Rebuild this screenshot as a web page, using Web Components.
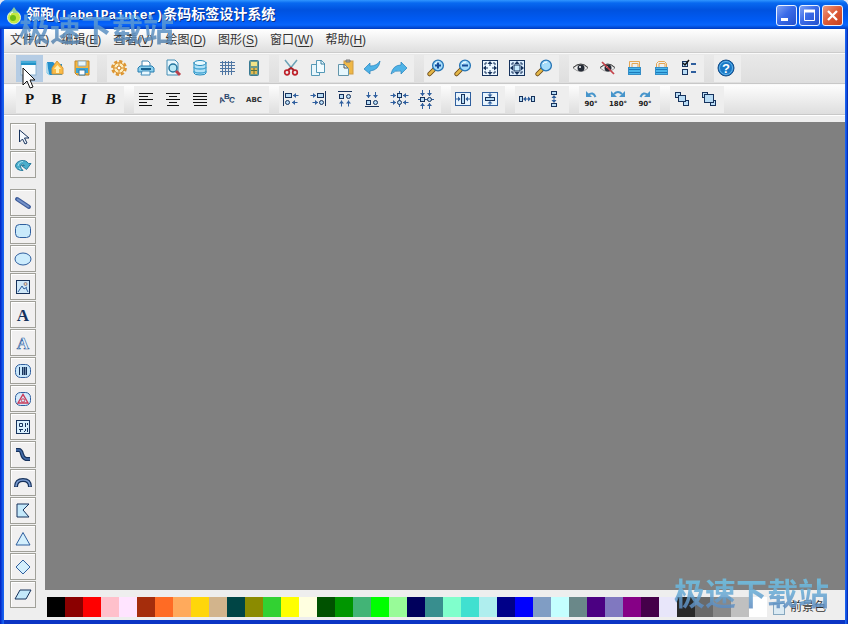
<!DOCTYPE html>
<html lang="zh-CN">
<head>
<meta charset="utf-8">
<title>领跑(LabelPainter)条码标签设计系统</title>
<style>
html,body{margin:0;height:100%}
body{font:12px/16px "Liberation Sans","Noto Sans CJK SC",sans-serif;background:#dfe8f5;overflow:hidden}
</style>
</head>
<body>
<label-painter></label-painter>
<script>
const N='#16325c', M='#2f5f9e', L='#b9dcf5';
const line=(d,c=N,w=1)=>`<path d="${d}" fill="none" stroke="${c}" stroke-width="${w}"/>`;
const box=(x,y,w,h,f=L,s=N,r=0)=>`<rect x="${x}" y="${y}" width="${w}" height="${h}" rx="${r}" fill="${f}" stroke="${s}"/>`;
const circ=(x,y,r,f=L,s=N)=>`<circle cx="${x}" cy="${y}" r="${r}" fill="${f}" stroke="${s}"/>`;
const poly=(p,f=L,s='none')=>`<polygon points="${p}" fill="${f}" stroke="${s}"/>`;
const AR={
 l:(x,y)=>line(`M${x} ${y}h5.5`,M)+poly(`${x},${y} ${x+3},${y-2.5} ${x+3},${y+2.5}`,M),
 r:(x,y)=>line(`M${x} ${y}h-5.5`,M)+poly(`${x},${y} ${x-3},${y-2.5} ${x-3},${y+2.5}`,M),
 u:(x,y)=>line(`M${x} ${y}v6`,M)+poly(`${x},${y} ${x-2.5},${y+3} ${x+2.5},${y+3}`,M),
 d:(x,y)=>line(`M${x} ${y}v-6`,M)+poly(`${x},${y} ${x-2.5},${y-3} ${x+2.5},${y-3}`,M)
};
const lens=(extra)=>`<path d="M2.5 15l4.5-4.500" stroke="#6b4a18" stroke-width="4.5" stroke-linecap="round"/><path d="M2.5 15l4-4" stroke="#e4b748" stroke-width="2.6" stroke-linecap="round"/><circle cx="11" cy="6.5" r="5.4" fill="#a5dcfa" stroke="#2574b5" stroke-width="1.3"/><path d="M8 5q1-2 4-2" stroke="#fff" fill="none"/>${extra}`;
const alignRows=a=>line(a.map((s,i)=>`M${s[0]} ${3.5+i*3}h${s[1]}`).join(''),'#111');
const eye=`<path d="M1 9q8-7 15 0-7 7-15 0z" fill="#eee" stroke="#999"/><circle cx="9" cy="9" r="3.5" fill="#252b36"/><circle cx="8" cy="8" r="1" fill="#fff"/><path d="M1 8.5q8-7 15 0" fill="none" stroke="#444"/>`;
const lock=(d)=>`<path d="${d}" fill="none" stroke="#e4a653"/><path d="M6 8V4.500h6V8" fill="none" stroke="#e4a653"/>${box(2.5,8.5,12,7,'#48b5ea','#348dc7')}${line('M3 10.5h11M3 13.5h11','#1d79ba')}`;
const rotate=(t,a)=>`${a}<text x="9" y="16" text-anchor="middle" font-family="DejaVu Sans" font-weight="bold" font-size="7" fill="#222">${t}</text>`;
const turnL=line('M6 5q5-4 7.5 2','#4795cb',2)+poly('4,1 4,7 10,7','#4795cb');
const turnR=line('M12 5q-5-4-7.5 2','#4795cb',2)+poly('14,1 14,7 8,7','#4795cb');
const turnB=line('M5 4q4-4 8 0','#4795cb',2)+poly('2,1 2,7 8,7','#4795cb')+poly('16,1 16,7 10,7','#4795cb');
const tri=(x,y,t)=>`<path transform="translate(${x} ${y}) rotate(${t})" d="M-2.5 0h5L0-3z" fill="${N}"/>`;
const ICONS={
 new:`<rect x="2" y="2" width="15" height="14" fill="#f9fdff" stroke="#8bb4d4"/><rect x="2" y="2" width="15" height="4" fill="#2193c8"/><path d="M2 3h15" stroke="#68c3e8"/>`,
 open:`<path d="M1 3h6l2 2h7v11H3z" fill="#248fcb"/><path d="M1 4v10l3 2" stroke="#6ec7ed" fill="none"/><path d="M6 9l5-7 6 7v6H6z" fill="#fbbb45" stroke="#d89a3c"/><path d="M8 10l3.5-4 3.5 4h-2v4h-3v-4z" fill="#fff0b4"/>`,
 save:`<path d="M2 2h14v14H4l-2-2z" fill="#f4b641" stroke="#c18628"/><path d="M5 2h8v5H5z" fill="#e7f6fc" stroke="#8faab9"/><path d="M3 9h12v5H3z" fill="#3ca6d6"/><path d="M6 11h6v5H6z" fill="#fff" stroke="#377ba6"/>`,
 gear:`<circle cx="9" cy="9" r="6.7" fill="#fbeecb" stroke="#dd9735" stroke-width="2.4" stroke-dasharray="3.2 2.06"/><circle cx="9" cy="9" r="5.3" fill="#fdeebf" stroke="#d98a22"/><circle cx="9" cy="9" r="2" fill="#fff" stroke="#c77b1d"/>${line('M9 4v3M9 11v3M4 9h3M11 9h3','#d98a22')}`,
 print:`<path d="M5 7V2h6l2 2v3" fill="#fff" stroke="#4386b2"/><path d="M3 7h12l2 2v4H1V9z" fill="#8bd0ee" stroke="#267caf"/><path d="M4 9h10v2H4z" fill="#17608f"/><path d="M5 12h8v4H4z" fill="#e8f8ff" stroke="#438cba"/>`,
 preview:`<path d="M3 1h8l3 3v12H3z" fill="#e8f7fd" stroke="#458eb5"/><circle cx="9" cy="9" r="4" fill="#b9e8f5" stroke="#24759e" stroke-width="1.5"/><path d="M12 12l4 4" stroke="#b9404b" stroke-width="3"/>`,
 db:`<path d="M3 3v11q0 2 6 2t6-2V3" fill="#b4e3f8" stroke="#238abd"/><ellipse cx="9" cy="4" rx="6" ry="2.5" fill="#e9faff" stroke="#238abd"/>${line('M3 8q0 2 6 2t6-2M3 12q0 2 6 2t6-2','#46a5d2',1.3)}`,
 grid:line('M2 3.5h15M2 6.5h15M2 9.5h15M2 12.5h15M4.5 2v14M7.5 2v14M10.5 2v14M13.5 2v14','#4f76a3'),
 calc:`<rect x="4.5" y="1.5" width="9" height="15" rx="1" fill="#6d9a8c" stroke="#397a94"/><rect x="6" y="3" width="6" height="4" fill="#f2e487"/><rect x="6" y="9" width="6" height="6" fill="#e5b94f"/>${line('M6 11.5h6M9 9v6','#54713f')}`,
 cut:`<path d="M3 1l8 10M15 1L7 11" stroke="#6ba2b6" stroke-width="1.5"/>${circ(5,13.5,2.3,'none','#be222b').replace('/>',' stroke-width="1.7"/>')}${circ(13,13.5,2.3,'none','#be222b').replace('/>',' stroke-width="1.7"/>')}<path d="M6 11l3-2 3 2" fill="none" stroke="#aa2027" stroke-width="2"/>`,
 copy:`<path d="M2.5 5.5h5l3 3v8h-8z" fill="#e8f6fb" stroke="#5599b7"/><path d="M7.5 1.5h5l3 3v9h-8z" fill="#f1fbff" stroke="#5599b7"/><path d="M12 1v4h4" fill="none" stroke="#387f9f"/>`,
 paste:`<rect x="8" y="2" width="9" height="13" fill="#efb746" stroke="#cf9c45"/><path d="M10 3V1h4v2z" fill="#aaa" stroke="#777"/><path d="M2.5 5.5h6l4 4v7h-10z" fill="#e6f7fd" stroke="#6395aa"/><path d="M8 5v4h4" fill="none" stroke="#555"/>`,
 undo:`<path d="M1 10l6-6v3q7 0 10-5-1 9-10 10v3z" fill="#4fb3e7" stroke="#2381bc" stroke-width=".7"/>`,
 redo:`<path d="M17 9l-6-6v3Q3 6 1 15q4-4 10-3v3z" fill="#4fb3e7" stroke="#2381bc" stroke-width=".7"/>`,
 zin:lens(line('M8 6.5h6M11 3.5v6','#164c99',2)),
 zout:lens(line('M8 6.5h6','#164c99',2)),
 zoom:lens(''),
 fit:box(1.5,1.5,15,15,'#edf7ff')+tri(9,5,0)+tri(13,9,90)+tri(9,13,180)+tri(5,9,270)+line('M9 4v3M9 11v3M4 9h3M11 9h3')+line('M4 6V4h2M12 4h2v2M14 12v2h-2M6 14H4v-2'),
 page:box(1.5,1.5,15,15,'#dceeff')+box(6,6,6,6,'#c7eaff')+tri(9,5,0)+tri(13,9,90)+tri(9,13,180)+tri(5,9,270)+line('M4 6V4h2M12 4h2v2M14 12v2h-2M6 14H4v-2'),
 eye,
 hide:eye+line('M3 3l12 12','#c5424a',1.7),
 lock:lock('M3.5 8V2.5h10V8'), unlock:lock('M3.5 8V4.500l2-2h6l2 2V8'),
 list:box(2.5,2.5,5,5)+line('M3 4l2 2 4-5','#111',1.5)+box(2.5,10.5,5,5)+line('M11 5h5M11 13h5',M,2),
 help:`<circle cx="9" cy="9" r="8" fill="#1978c5" stroke="#174d87"/><circle cx="9" cy="9" r="6.5" fill="none" stroke="#67b6ed"/><text x="9" y="14" text-anchor="middle" font-size="13" font-weight="bold" font-family="Liberation Sans" fill="#fff">?</text>`,
 left:alignRows([[2,14],[2,9],[2,14],[2,8],[2,13]]), center:alignRows([[2,14],[5,8],[2,14],[5,8],[3,12]]), justify:alignRows([[2,14],[2,14],[2,14],[2,14],[3,13]]),
 abcarc:`<g font-family="Liberation Sans" font-weight="bold" font-size="8" fill="#29456b"><text x="1" y="13" transform="rotate(-18 3 11)">A</text><text x="6" y="9">B</text><text x="11" y="12" transform="rotate(14 12 10)">C</text></g>`,
 abc:`<text x="9" y="12" text-anchor="middle" font-size="7" font-weight="bold" font-family="DejaVu Sans" fill="#333">ABC</text>`,
 al:line('M1.5 1v15')+box(3.5,3.5,6,4)+AR.l(11,5.5)+circ(5.5,12.5,2)+AR.l(10,12.5),
 ar:line('M16.5 1v15')+box(8.5,3.5,6,4)+AR.r(7,5.5)+circ(12.5,12.5,2)+AR.r(9,12.5),
 at:line('M2 1.5h14')+box(3.5,4.5,4,4)+circ(12.5,6.5,2)+AR.u(5.5,10.5)+AR.u(12.5,10.5),
 ab:line('M2 16.5h14')+box(3.5,10.5,4,4)+circ(12.5,12.5,2)+AR.d(5.5,8)+AR.d(12.5,8),
 ac:line('M9.5 1v16',M)+box(7.5,3.5,4,4)+circ(9.5,12.5,2)+AR.r(6,5.5)+AR.l(13,5.5)+AR.r(6,12.5)+AR.l(13,12.5),
 am:line('M1 9.5h16',M)+box(3.5,7.5,4,4)+circ(12.5,9.5,2)+AR.d(5.5,6)+AR.d(12.5,6)+AR.u(5.5,13)+AR.u(12.5,13),
 ph:box(1.5,2.5,15,13,'#e8f4fd',M)+box(7.5,4.5,3,9)+line('M2 9h4M12 9h4',M)+poly('6.5,9 4,6.5 4,11.5',M)+poly('11.5,9 14,6.5 14,11.5',M),
 pv:box(1.5,2.5,15,13,'#e8f4fd',M)+box(4.5,7.5,9,3)+line('M9 3v4M9 12v4',M)+poly('9,7 6.5,4.5 11.5,4.5',M)+poly('9,11 6.5,13.5 11.5,13.5',M),
 dh:box(1.5,6.5,3,5)+box(13.5,6.5,3,5)+line('M6 9h6',M)+poly('5,9 8,6.5 8,11.5',M)+poly('13,9 10,6.5 10,11.5',M),
 dv:box(6.5,1.5,5,3)+box(6.5,13.5,5,3)+line('M9 6v6',M)+poly('9,5 6.5,8 11.5,8',M)+poly('9,13 6.5,10 11.5,10',M),
 rl:rotate('90°',turnL), r180:rotate('180°',turnB), rr:rotate('90°',turnR),
 front:box(2.5,2.5,5,5)+box(10.5,10.5,5,5)+box(5.5,5.5,7,6),
 back:box(2.5,2.5,5,5)+box(10.5,10.5,5,5)+box(4.5,4.5,9,8,'#b9dcf5'),
 pointer:`<path d="M5.5 2v12l3-3 2.5 5 2-1-2.500-5H15z" fill="#f5faff" stroke="${N}"/>`,
 spin:`<path d="M1.500 10A7 6 0 0 1 14.500 7.500H17L12.500 13.500 7.500 9.500H10.500Q8 6.500 6.500 10 6.500 12.500 9 14.500 2.500 14.500 1.500 10z" fill="#4aaecc" stroke="#287b9c"/><path d="M4 10q1-4.500 5-4.500M5 12l2 1.500" fill="none" stroke="#a4e2f2"/>`,
 line:`<path d="M3 5l12 8" stroke="#405f9c" stroke-width="4" stroke-linecap="round"/><path d="M3 5l12 8" stroke="#7592c8" stroke-width="2"/>`,
 rect:box(1.5,2.5,15,13,'#c9eafb',M,4), ellipse:`<ellipse cx="9" cy="9" rx="8" ry="6" fill="#ccecfd" stroke="${M}"/>`,
 image:box(2.5,2.5,13,13,'#cfe8f8')+line('M4 14l4-6 2 3 3-2M12 10l2 4',M,1)+circ(11.5,6,1.5,'#f8d39c','#8b8197'),
 text:`<text x="9" y="15" text-anchor="middle" font-size="17" font-weight="bold" font-family="Liberation Serif" fill="${N}">A</text>`,
 outline:`<text x="9" y="15" text-anchor="middle" font-size="17" font-weight="bold" font-family="Liberation Serif" fill="#e8f5ff" stroke="${M}" stroke-width=".6">A</text>`,
 barcode:box(1.5,2.5,15,13,'#c8e7fb',M,5)+line('M5.5 5v8M8.5 5v8M12.5 5v8',N,1)+line('M10.5 5v8',N,2),
 brand:box(1.5,2.5,15,13,'#d3eafb',M,5)+line('M4 13L9 4.500 14 13z','#cc3d5a',1.4)+circ(9,10.5,1.7,'none','#cc3d5a'),
 qr:box(2.5,2.5,13,13,'#d8effd')+line('M5.5 5.5h3v3h-3zM11.5 5v4M13.5 5v2M5 11.5h4M6.5 12v2M11.5 11v2M10 13.500h1M13.5 10v4',N,1),
 curve:line('M2 4h3q2 0 3 4t4 5h4',N,4)+line('M2 4h3q2 0 3 4t4 5h4','#456eaa',1.5), arc:line('M2 13q0-7 7-7t7 7',N,4)+line('M2 12.500q0-6.500 7-6.500t7 6.500','#7799cf',1.7),
 polygon:poly('3,2 15,2 9,8 15,15 3,15','#c4e9fb',N), triangle:poly('9,2.5 16,15 2,15','#d3effd',M), diamond:poly('9,2 16,9 9,16 2,9','#d3effd',M), para:poly('6,4 17,4 12,13 1,13','#c4e9fb',N),
 drop:`<ellipse cx="9" cy="10.5" rx="6.5" ry="6.5" fill="#c5e942" stroke="#e4f7da"/><path d="M9 0q-3 4-4 6h8Q11 3 9 0" fill="#8fcf9f"/><circle cx="8" cy="11" r="3" fill="#6fbd17"/><path d="M5 8q1-3 3-3" stroke="#fff" fill="none"/>`
};
function define(name,html,setup){
 const t=document.createElement('template');t.innerHTML=html;
 customElements.define(name,class extends HTMLElement{
  connectedCallback(){
   if(this.shadowRoot)return;
   const r=this.attachShadow({mode:'open'});r.append(t.content.cloneNode(true));
   if(setup)setup(r,this);
  }
 });
}
define('lp-icon',`<style>:host{display:block;width:18px;height:18px}svg{display:block;width:100%;height:100%;overflow:visible}</style><svg viewBox="0 0 18 18" aria-hidden="true"></svg>`,(r,e)=>{r.querySelector('svg').innerHTML=ICONS[e.getAttribute('name')]||''});
define('tool-button',`<style>:host{display:block;width:27px;height:27px}button{display:grid;place-items:center;width:100%;height:100%;box-sizing:border-box;padding:0 3px 1px 0;border:0;background:#eee;color:#111;font:bold 15px/16px "Liberation Serif",serif}:host([label]) button{padding:0 0 1px}:host([active]) button{background:#b5cce4}:host([italic]) button{font-style:italic}:host([framed]){width:26px}:host([framed]) button{padding:0;border:1px solid #a0a099;background:#f1f0f0;box-shadow:inset 1px 1px #fff}</style><button><slot></slot></button>`,(r,e)=>{
 const b=r.querySelector('button'),i=e.getAttribute('icon');
 b.setAttribute('aria-label',e.getAttribute('label')||i);
 if(i){const x=document.createElement('lp-icon');x.setAttribute('name',i);b.append(x)}
});
define('tool-group',`<style>:host{display:flex;background:#eee}</style><slot></slot>`);
define('tool-row',`<style>:host{display:flex;align-items:center;gap:10px;height:29px;padding:0 12px;border-bottom:1px solid #c8c8c8;border-top:1px solid #f9f9f9;background:linear-gradient(#e9e9e9,#dedede)}:host([low]){background:linear-gradient(#fdfdfd,#dedede)}</style><slot></slot>`);
define('menu-bar',`<style>:host{display:flex;align-items:center;gap:12px;height:24px;padding:0 6px 2px;box-sizing:border-box;background:linear-gradient(#fff,#dfdfdf);border-bottom:1px solid #ccc}button{border:0;padding:0;margin:0;background:none;font:inherit;color:#333;line-height:16px;white-space:nowrap}u{text-underline-offset:2px}</style>`,r=>{
 [['文件','F'],['编辑','E'],['查看','V'],['绘图','D'],['图形','S'],['窗口','W'],['帮助','H']].forEach(([a,k])=>{const b=document.createElement('button');b.innerHTML=`${a}(<u>${k}</u>)`;r.append(b)});
});
define('title-bar',`<style>
:host{display:flex;align-items:center;height:29px;box-sizing:border-box;padding:2px 5px 0 5px;background:linear-gradient(#3096ff 0,#0869f0 3px,#0052df 10px,#005bf4 20px,#0865fb 25px,#003bbf 29px);color:#fff}
h1{flex:1;margin:0 0 0 3px;font:bold 14px/18px "Liberation Mono","Noto Sans CJK SC",monospace;white-space:nowrap;text-shadow:1px 1px #0a2f86}
h1 span{font-size:13px}
nav{display:flex;gap:2px}
button{width:21px;height:21px;box-sizing:border-box;border:1px solid #e9f1ff;border-radius:3px;padding:0;background:linear-gradient(135deg,#7fa2f5,#3a6be8 45%,#2350cc);display:grid;place-items:center}
button.x{background:linear-gradient(135deg,#ed9a80,#dd5a36 50%,#c64020)}
svg{width:19px;height:19px;fill:none;stroke:#fff}
</style><lp-icon name="drop"></lp-icon><h1>领跑<span>(LabelPainter)</span>条码标签设计系统</h1><nav>
<button aria-label="最小化"><svg viewBox="0 0 19 19"><path d="M4 13.5h7" stroke-width="3"/></svg></button>
<button aria-label="最大化"><svg viewBox="0 0 19 19"><path d="M4.5 4.5h10v10h-10z"/><path d="M4 5h11" stroke-width="3"/></svg></button>
<button class="x" aria-label="关闭"><svg viewBox="0 0 19 19"><path d="M5 5l9 9M14 5l-9 9" stroke-width="2.3"/></svg></button></nav>`);
define('tool-rail',`<style>:host{display:flex;flex-direction:column;gap:1px;padding:7px 9px 0 6px}tool-button:nth-of-type(3){margin-top:10px}</style>`,r=>{
 'pointer spin line rect ellipse image text outline barcode brand qr curve arc polygon triangle diamond para'.split(' ').forEach(n=>{const b=document.createElement('tool-button');b.setAttribute('framed','');b.setAttribute('icon',n);r.append(b)});
});
define('color-bar',`<style>:host{display:flex;align-items:center;height:30px;box-sizing:border-box;padding:4px 2px 0}div{display:flex}button{width:18px;height:20px;border:0;padding:0}label{display:flex;align-items:center;gap:5px;margin-left:6px;color:#333;white-space:nowrap}input{appearance:none;width:12px;height:12px;box-sizing:border-box;margin:4px 0 0;border:1px solid #87a8bf;background:#dbeaf3}</style><div></div><label><input type="checkbox">前景色</label>`,r=>{
 '#000 #8b0000 #f00 #ffc0cb #ffe4ff #a52d0c #ff6b24 #ffaa5c #ffd60a #d2b48c #004545 #8b8b00 #32d132 #ff0 #ffffe0 #005200 #009600 #42b476 #0f0 #98fb98 #00005c #388e8e #80ffcc #40e0d0 #afeeee #000088 #00f #809dc4 #c4ffff #6a8889 #4b0082 #8078c0 #860086 #45004a #e8e6fa #292929 #696969 #888 #c0c0c0 #fff'.split(' ').forEach(c=>{const b=document.createElement('button');b.style.background=c;b.setAttribute('aria-label',c);r.querySelector('div').append(b)});
});
define('site-mark',`<style>:host{position:absolute;pointer-events:none;font:bold 31px/40px "Noto Sans CJK SC",sans-serif;white-space:nowrap;opacity:.85}span{color:transparent;background:linear-gradient(var(--from) 30%,var(--to) 85%);-webkit-background-clip:text;background-clip:text}</style><span>极速下载站</span>`);
const g=s=>`<tool-group>${s.split(' ').map(n=>`<tool-button icon="${n}"${n==='new'?' active':''}></tool-button>`).join('')}</tool-group>`;
define('label-painter',`<style>
:host{position:relative;display:flex;flex-direction:column;height:100vh;box-sizing:border-box;border-radius:7px 7px 0 0;overflow:hidden;background:linear-gradient(90deg,#001fc0,#1760ef 3px,#1760ef calc(100% - 2px),#001fa8)}
.body{flex:1;display:flex;flex-direction:column;min-height:0;margin:0 3px 0 4px;background:#eee;border-bottom:4px solid #0c35c4}
.work{flex:1;display:flex;min-height:0;border-top:1px solid #fff}
.stage{flex:1;display:flex;flex-direction:column;min-width:0}
main{flex:1;margin-top:6px;background:#808080}
.top{left:19px;top:8px;--from:#5d9fdc;--to:#5a84ad}.bottom{right:19px;bottom:12px;--from:#6fc0e4;--to:#5e8cc0}
.cursor{position:absolute;left:22px;top:67px;width:14px;height:23px}
</style>
<title-bar></title-bar>
<div class="body">
<menu-bar></menu-bar>
<tool-row>${g('new open save')}${g('gear print preview db grid calc')}${g('cut copy paste undo redo')}${g('zin zout fit page zoom')}${g('eye hide lock unlock list')}${g('help')}</tool-row>
<tool-row low><tool-group><tool-button label="普通">P</tool-button><tool-button label="粗体">B</tool-button><tool-button italic label="斜体">I</tool-button><tool-button italic label="粗斜体">B</tool-button></tool-group>${g('left center justify abcarc abc')}${g('al ar at ab ac am')}${g('ph pv')}${g('dh dv')}${g('rl r180 rr')}${g('front back')}</tool-row>
<div class="work"><tool-rail></tool-rail><div class="stage"><main></main><color-bar></color-bar></div></div>
</div>
<site-mark class="top"></site-mark><site-mark class="bottom"></site-mark>
<svg class="cursor" viewBox="0 0 14 23" aria-hidden="true"><path d="M1 1v17l4-4 3 7 3-1-3-7h5z" fill="#fff" stroke="#111"/></svg>`);
</script>
</body>
</html>
